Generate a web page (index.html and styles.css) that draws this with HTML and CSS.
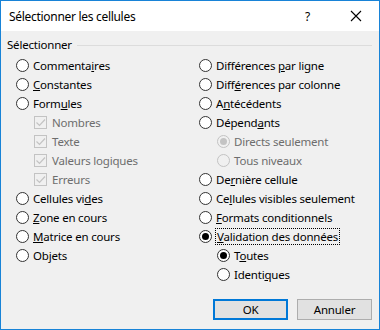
FILE: index.html
```html
<!DOCTYPE html>
<html lang="fr">
<head>
  <meta charset="UTF-8">
  <title>Sélectionner les cellules</title>
  <link rel="stylesheet" href="styles.css">
</head>
<body>
  <div class="window">
    <div class="titlebar">
      <span class="title">Sélectionner les cellules</span>
      <span class="help">?</span>
      <svg class="close" width="12" height="12" viewBox="0 0 12 12">
        <path d="M1 1 L11 11 M11 1 L1 11" stroke="#000" stroke-width="1.1" fill="none"/>
      </svg>
    </div>

    <div class="content">
      <div class="group-header">
        <span>Sélectionner</span>
        <div class="group-line"></div>
      </div>

      <div class="columns">
        <div class="col col-left">
          <div class="row"><span class="radio"></span><span>Commenta<u>i</u>res</span></div>
          <div class="row"><span class="radio"></span><span><u>C</u>onstantes</span></div>
          <div class="row"><span class="radio"></span><span>Form<u>u</u>les</span></div>
          <div class="row sub disabled"><span class="check"><svg width="11" height="11" viewBox="0 0 11 11"><path d="M1.5 5.5 L4.5 8.5 L10 2.5" stroke="#c3c3c3" stroke-width="1.2" fill="none"/></svg></span><span>Nombres</span></div>
          <div class="row sub disabled"><span class="check"><svg width="11" height="11" viewBox="0 0 11 11"><path d="M1.5 5.5 L4.5 8.5 L10 2.5" stroke="#c3c3c3" stroke-width="1.2" fill="none"/></svg></span><span>Texte</span></div>
          <div class="row sub disabled"><span class="check"><svg width="11" height="11" viewBox="0 0 11 11"><path d="M1.5 5.5 L4.5 8.5 L10 2.5" stroke="#c3c3c3" stroke-width="1.2" fill="none"/></svg></span><span>Valeurs logiques</span></div>
          <div class="row sub disabled"><span class="check"><svg width="11" height="11" viewBox="0 0 11 11"><path d="M1.5 5.5 L4.5 8.5 L10 2.5" stroke="#c3c3c3" stroke-width="1.2" fill="none"/></svg></span><span>Erreurs</span></div>
          <div class="row"><span class="radio"></span><span>Cellules vi<u>d</u>es</span></div>
          <div class="row"><span class="radio"></span><span><u>Z</u>one en cours</span></div>
          <div class="row"><span class="radio"></span><span><u>M</u>atrice en cours</span></div>
          <div class="row"><span class="radio"></span><span>Ob<u>j</u>ets</span></div>
        </div>

        <div class="col col-right">
          <div class="row"><span class="radio"></span><span>Différences <u>p</u>ar ligne</span></div>
          <div class="row"><span class="radio"></span><span>Diff<u>é</u>rences par colonne</span></div>
          <div class="row"><span class="radio"></span><span>A<u>n</u>técédents</span></div>
          <div class="row"><span class="radio"></span><span>Dépend<u>a</u>nts</span></div>
          <div class="row sub disabled"><span class="radio checked"></span><span>Directs seulement</span></div>
          <div class="row sub disabled"><span class="radio"></span><span>Tous niveaux</span></div>
          <div class="row"><span class="radio"></span><span>De<u>r</u>nière cellule</span></div>
          <div class="row"><span class="radio"></span><span>Ce<u>l</u>lules visibles seulement</span></div>
          <div class="row"><span class="radio"></span><span><u>F</u>ormats conditionnels</span></div>
          <div class="row"><span class="radio checked"></span><span class="focus"><u>V</u>alidation des données</span></div>
          <div class="row sub"><span class="radio checked"></span><span>T<u>o</u>utes</span></div>
          <div class="row sub"><span class="radio"></span><span>Identi<u>q</u>ues</span></div>
        </div>
      </div>

      <div class="footer">
        <button class="btn btn-default">OK</button>
        <button class="btn">Annuler</button>
      </div>
    </div>
  </div>
</body>
</html>
```

FILE: styles.css
```css
body {
  margin: 0;
  font-family: "Segoe UI", "Noto Sans", sans-serif;
  font-size: 11.5px;
  letter-spacing: -0.2px;
  color: #000;
}

.window {
  width: 380px;
  height: 330px;
  box-sizing: border-box;
  border: 1px solid #1883d7;
  background: #f0f0f0;
  display: flex;
  flex-direction: column;
}

.titlebar {
  height: 30px;
  background: #fff;
  display: flex;
  align-items: center;
  padding-left: 8px;
  padding-right: 17px;
}

.title {
  flex: 1;
  font-size: 12px;
  letter-spacing: -0.3px;
}

.help {
  margin-right: 40px;
  font-size: 12px;
}

.close {
  display: block;
}

.content {
  flex: 1;
  padding: 6px 7px 0 6px;
}

.group-header {
  display: flex;
  align-items: center;
  height: 15px;
}

.group-line {
  flex: 1;
  height: 1px;
  background: #dcdcdc;
  margin-left: 5px;
  margin-top: 1px;
}

.columns {
  display: flex;
  margin-top: 4px;
}

.col-left {
  width: 183px;
  padding-left: 9px;
}

.row {
  height: 19px;
  display: flex;
  align-items: center;
  gap: 4px;
  white-space: nowrap;
}

.row.sub {
  padding-left: 18px;
}

.col-left .row.sub {
  gap: 5px;
}

.disabled {
  color: #6d6d6d;
}

.radio {
  width: 13px;
  height: 13px;
  box-sizing: border-box;
  border: 1px solid #333;
  border-radius: 50%;
  background: #fff;
  display: flex;
  align-items: center;
  justify-content: center;
  flex: none;
}

.radio.checked::after {
  content: "";
  width: 7px;
  height: 7px;
  border-radius: 50%;
  background: #000;
}

.disabled .radio {
  border-color: #c3c3c3;
  background: #f0f0f0;
}

.disabled .radio.checked::after {
  background: #c3c3c3;
}

.check {
  width: 13px;
  height: 13px;
  box-sizing: border-box;
  border: 1px solid #c3c3c3;
  display: flex;
  align-items: center;
  justify-content: center;
  flex: none;
}

.check svg {
  display: block;
}

.focus {
  outline: 1px dotted #000;
  outline-offset: 0;
  padding: 0 1px;
  line-height: 15px;
}

.footer {
  display: flex;
  justify-content: flex-end;
  gap: 9px;
  margin-top: 15px;
}

.btn {
  width: 75px;
  height: 21px;
  box-sizing: border-box;
  border: 1px solid #adadad;
  background: #e1e1e1;
  font-family: inherit;
  font-size: 11.5px;
  letter-spacing: -0.2px;
  color: #000;
  padding: 0;
}

.btn-default {
  border: 2px solid #0078d7;
}
```
